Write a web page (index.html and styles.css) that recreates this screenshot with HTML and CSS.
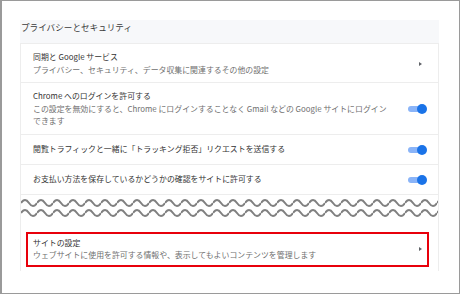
FILE: index.html
```html
<!DOCTYPE html>
<html lang="ja">
<head>
    <meta charset="UTF-8">
    <meta name="viewport" content="width=device-width, initial-scale=1.0">
    <title>プライバシーとセキュリティ</title>
    <link rel="stylesheet" href="styles.css">
</head>
<body>
    <div class="frame">
        <section class="panel">
            <h2 class="panel-title">プライバシーとセキュリティ</h2>

            <div class="card">
                <div class="row">
                    <div class="row-text">
                        <div class="row-label">同期と Google サービス</div>
                        <div class="row-sub">プライバシー、セキュリティ、データ収集に関連するその他の設定</div>
                    </div>
                    <span class="arrow"></span>
                </div>

                <div class="row">
                    <div class="row-text">
                        <div class="row-label">Chrome へのログインを許可する</div>
                        <div class="row-sub">この設定を無効にすると、Chrome にログインすることなく Gmail などの Google サイトにログインできます</div>
                    </div>
                    <span class="toggle"></span>
                </div>

                <div class="row">
                    <div class="row-text">
                        <div class="row-label">閲覧トラフィックと一緒に「トラッキング拒否」リクエストを送信する</div>
                    </div>
                    <span class="toggle"></span>
                </div>

                <div class="row">
                    <div class="row-text">
                        <div class="row-label">お支払い方法を保存しているかどうかの確認をサイトに許可する</div>
                    </div>
                    <span class="toggle"></span>
                </div>

                <!-- omitted part of the list -->
                <svg class="cut" width="417" height="26" viewBox="0 0 417 26">
                    <defs>
                        <pattern id="wave" width="16" height="26" patternUnits="userSpaceOnUse">
                            <path d="M0 8 q4 -6 8 0 t8 0 M0 18 q4 -6 8 0 t8 0" fill="none" stroke="#808080" stroke-width="2"/>
                        </pattern>
                    </defs>
                    <rect x="0" y="0" width="417" height="26" fill="url(#wave)"/>
                </svg>

                <div class="row row-marked">
                    <div class="row-text">
                        <div class="row-label">サイトの設定</div>
                        <div class="row-sub">ウェブサイトに使用を許可する情報や、表示してもよいコンテンツを管理します</div>
                    </div>
                    <span class="arrow"></span>
                </div>
            </div>
        </section>
    </div>
</body>
</html>
```

FILE: styles.css
```css
:root {
    --text-color: #333333;
    --sub-color: #6f6f6f;
    --line-color: #ededed;
    --band-color: #f7f8fa;
    --blue: #1a73e8;
    --blue-light: #8ab4f8;
}

* {
    margin: 0;
    padding: 0;
    box-sizing: border-box;
}

body {
    font-family: "Noto Sans CJK JP", "Noto Sans", sans-serif;
    background: white;
    color: var(--text-color);
}

.frame {
    width: 460px;
    height: 294px;
    border: 1px solid #9a9a9a;
    border-left-width: 2px;
    padding: 19px 0 0 18px;
}

.panel {
    width: 419px;
}

.panel-title {
    height: 23px;
    padding: 1px 0 0 1px;
    background: var(--band-color);
    font-size: 8.6px;
    font-weight: normal;
    line-height: 13px;
    color: #3a3a3a;
}

.card {
    background: white;
    border: 1px solid var(--line-color);
    border-bottom: none;
    padding-bottom: 4px;
}

.row {
    display: flex;
    align-items: center;
    min-height: 30px;
    padding: 7px 11px 6px 12px;
    border-bottom: 1px solid var(--line-color);
}

.row-text {
    flex: 1;
}

.row-label {
    font-size: 7.9px;
    line-height: 12.5px;
    color: var(--text-color);
}

.row-sub {
    font-size: 7.9px;
    line-height: 12.5px;
    color: var(--sub-color);
    padding-right: 16px;
}

.arrow {
    width: 0;
    height: 0;
    margin-right: 5px;
    border-top: 2.5px solid transparent;
    border-bottom: 2.5px solid transparent;
    border-left: 3px solid #5f6368;
}

.toggle {
    position: relative;
    width: 17px;
    height: 6px;
    margin-right: 2px;
    border-radius: 3px;
    background: var(--blue-light);
}

.toggle::after {
    content: '';
    position: absolute;
    right: -2px;
    top: -2px;
    width: 10px;
    height: 10px;
    border-radius: 50%;
    background: var(--blue);
}

.cut {
    display: block;
    margin-bottom: 11px;
}

.row-marked {
    height: 35px;
    margin: 0 9px 0 5px;
    padding: 0 0 0 5px;
    border: 2px solid #e8000b;
}
```
